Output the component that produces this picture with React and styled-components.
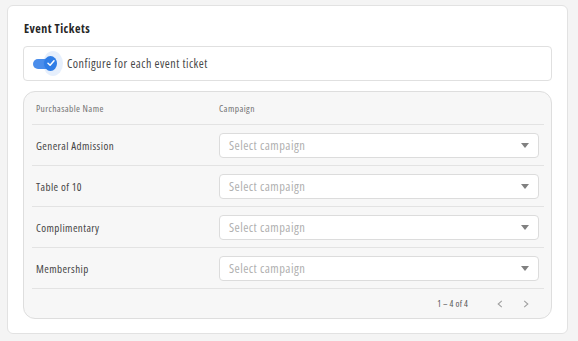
import React from "react";
import styled, { createGlobalStyle } from "styled-components";

const Global = createGlobalStyle`
  html, body { margin: 0; padding: 0; background: #f4f4f4; }
  body {
    font-family: "Open Sans", "Noto Sans", sans-serif;
    color: #333;
    font-stretch: 75%;
    letter-spacing: 0.4px;
  }
  * { box-sizing: border-box; }
`;

const Card = styled.section`
  margin: 5px 10px 0 7px;
  width: 561px;
  height: 329px;
  background: #fff;
  border: 1px solid #e2e2e2;
  border-radius: 6px;
  padding: 13px 15px 14px 15px;
  display: flex;
  flex-direction: column;
`;

const Title = styled.h2`
  margin: 0 0 7px 1px;
  font-size: 12px;
  line-height: 20px;
  font-weight: 700;
  color: #262626;
  letter-spacing: 0.45px;
`;

const ToggleBox = styled.div`
  height: 35px;
  border: 1px solid #e0e0e0;
  border-radius: 4px;
  display: flex;
  align-items: center;
  padding-left: 9px;
`;

const Switch = styled.span`
  position: relative;
  width: 22px;
  height: 10px;
  border-radius: 5px;
  background: #4a8deb;
  flex: none;
`;

const Halo = styled.span`
  position: absolute;
  left: 10px;
  top: -8px;
  width: 20px;
  height: 25px;
  border-radius: 50%;
  background: rgba(63, 134, 232, 0.13);
`;

const Thumb = styled.span`
  position: absolute;
  left: 11px;
  top: -3px;
  width: 13px;
  height: 15px;
  border-radius: 50%;
  background: #2f7de6;
  display: flex;
  align-items: center;
  justify-content: center;
`;

const ToggleLabel = styled.span`
  font-size: 12px;
  color: #474747;
  margin-left: 12px;
  letter-spacing: 0.5px;
`;

const TableBox = styled.div`
  margin-top: 10px;
  flex: 1;
  background: #f7f7f7;
  border: 1px solid #dedede;
  border-radius: 12px;
  padding: 0 7px 0 8px;
  display: flex;
  flex-direction: column;
`;

const Row = styled.div`
  display: grid;
  grid-template-columns: 187px 1fr;
  align-items: center;
  height: ${(p) => p.$h}px;
  border-bottom: 1px solid #e3e3e3;
  padding-right: 5px;
`;

const HeadCell = styled.div`
  font-size: 9.5px;
  color: #727272;
  padding-left: ${(p) => (p.$first ? 4 : 0)}px;
`;

const NameCell = styled.div`
  font-size: 11px;
  color: #454545;
  padding-left: 4px;
`;

const Select = styled.div`
  height: 25px;
  background: #fff;
  border: 1px solid #dcdcdc;
  border-radius: 4px;
  display: flex;
  align-items: center;
  justify-content: space-between;
  padding: 0 9px 0 9px;
  font-size: 12.5px;
  letter-spacing: 0.45px;
  color: #b0b0b0;
`;

const Caret = styled.span`
  width: 0;
  height: 0;
  border-left: 4.5px solid transparent;
  border-right: 4.5px solid transparent;
  border-top: 5px solid #808080;
`;

const Footer = styled.div`
  flex: 1;
  display: flex;
  align-items: center;
  justify-content: flex-end;
  padding-right: 5px;
`;

const Range = styled.span`
  font-size: 9px;
  color: #555;
  margin-right: 19px;
  letter-spacing: 0.2px;
`;

const PageBtn = styled.span`
  width: 26px;
  display: flex;
  justify-content: center;
`;

const Chevron = ({ dir }) => (
  <svg width="6" height="8" viewBox="0 0 6 8">
    <path
      d={dir === "left" ? "M4.8 0.8 L1.2 4 L4.8 7.2" : "M1.2 0.8 L4.8 4 L1.2 7.2"}
      fill="none"
      stroke="#a0a0a0"
      strokeWidth="1.1"
    />
  </svg>
);

const rows = ["General Admission", "Table of 10", "Complimentary", "Membership"];

export default function App() {
  return (
    <>
      <Global />
      <Card>
        <Title>Event Tickets</Title>
        <ToggleBox>
          <Switch>
            <Halo />
            <Thumb>
              <svg width="8" height="8" viewBox="0 0 8 8">
                <path d="M1 4.3 L3.1 6.2 L7 1.7" fill="none" stroke="#fff" strokeWidth="1.5" strokeLinecap="round" strokeLinejoin="round" />
              </svg>
            </Thumb>
          </Switch>
          <ToggleLabel>Configure for each event ticket</ToggleLabel>
        </ToggleBox>
        <TableBox>
          <Row $h={33}>
            <HeadCell $first>Purchasable Name</HeadCell>
            <HeadCell>Campaign</HeadCell>
          </Row>
          {rows.map((r) => (
            <Row key={r} $h={41}>
              <NameCell>{r}</NameCell>
              <Select>
                <span>Select campaign</span>
                <Caret />
              </Select>
            </Row>
          ))}
          <Footer>
            <Range>1 – 4 of 4</Range>
            <PageBtn><Chevron dir="left" /></PageBtn>
            <PageBtn><Chevron dir="right" /></PageBtn>
          </Footer>
        </TableBox>
      </Card>
    </>
  );
}
